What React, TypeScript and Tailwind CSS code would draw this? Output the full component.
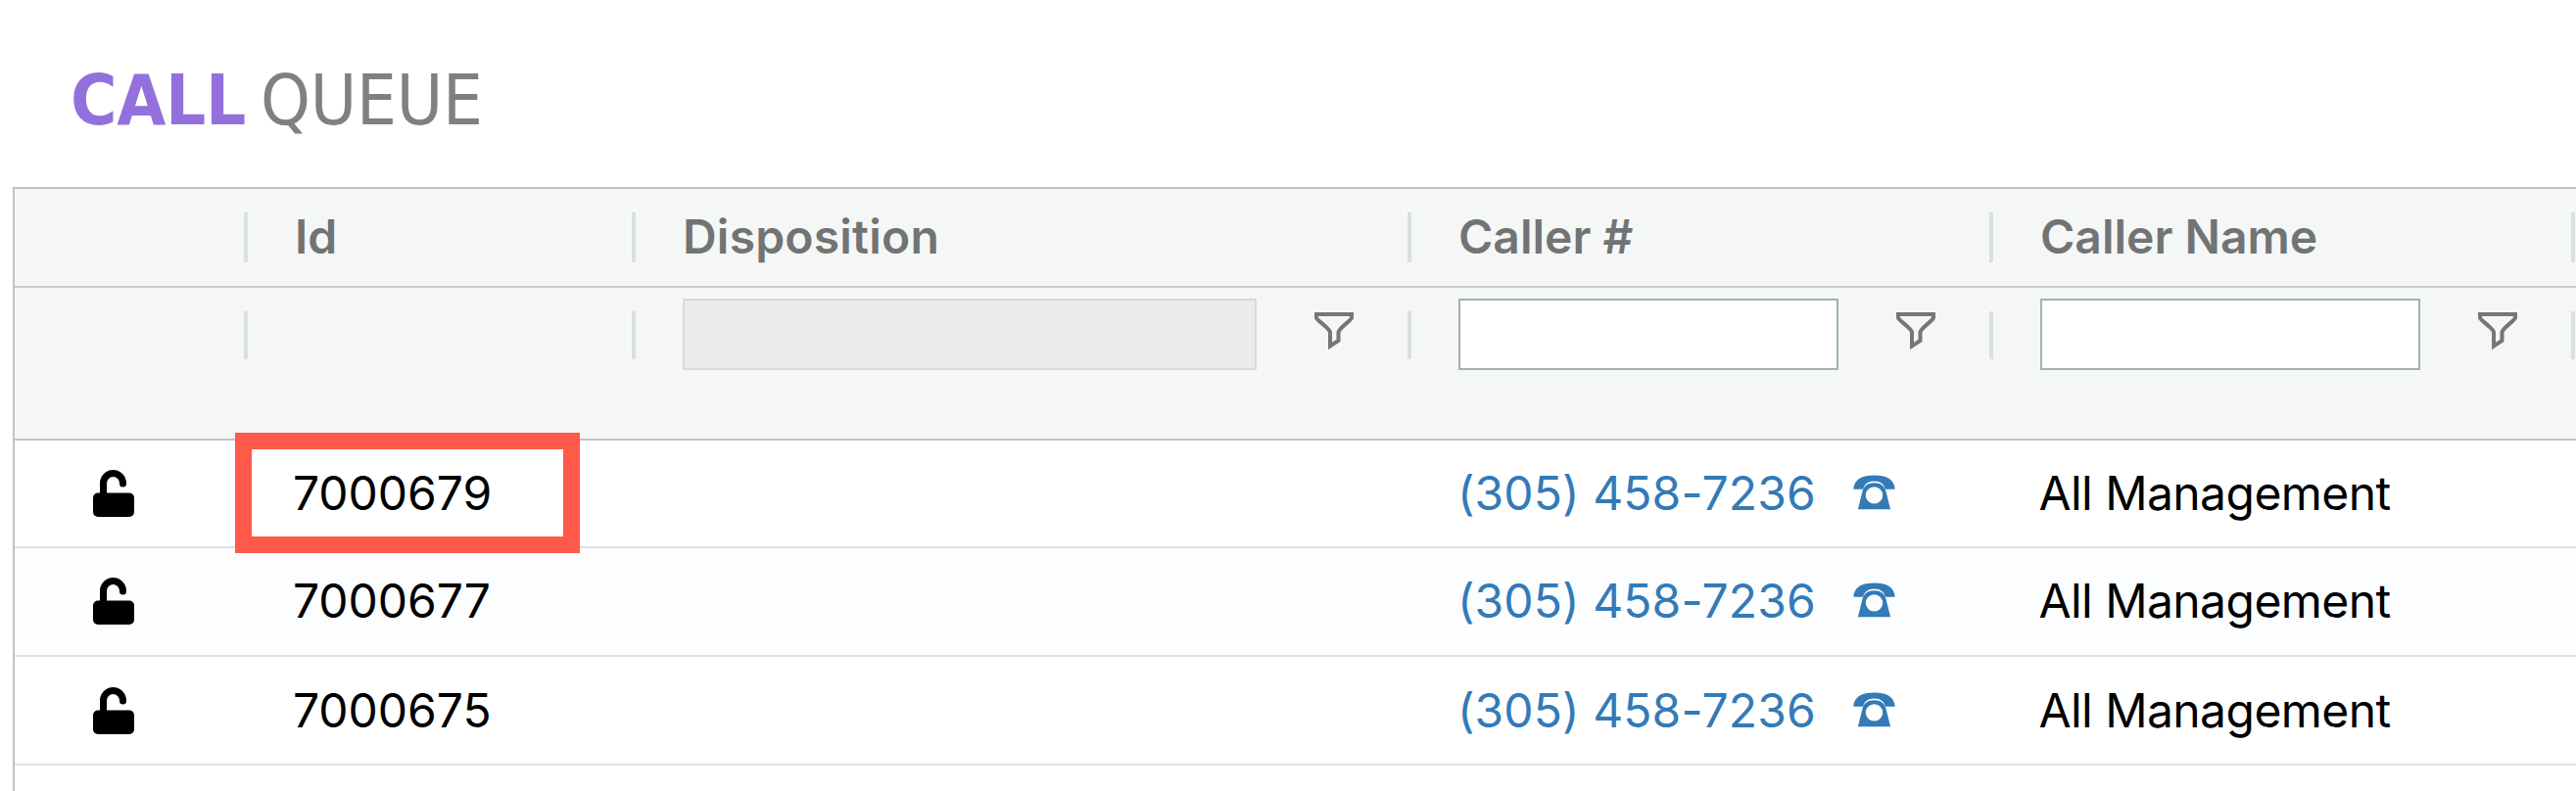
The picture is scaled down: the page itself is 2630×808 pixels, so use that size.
const COLS = "grid grid-cols-[236px_396px_792px_594px_594px_1fr]";

function Separator({ tall }: { tall?: boolean }) {
  return (
    <span
      className={
        tall
          ? "absolute top-[24px] -right-[2px] h-[51px] w-[4px] bg-[#d9dfe2]"
          : "absolute top-[24px] -right-[2px] h-[49px] w-[4px] bg-[#d9dfe2]"
      }
    />
  );
}

function UnlockIcon() {
  return (
    <svg viewBox="0 0 44 50" className="h-[50px] w-[44px]" fill="none">
      <path d="M11.500 27V14.500a10 10 0 0 1 20 0V15" stroke="#000" strokeWidth="7" strokeLinecap="round" />
      <rect x="1" y="24.500" width="42" height="24.500" rx="5" fill="#000" />
    </svg>
  );
}

function FunnelIcon() {
  return (
    <svg viewBox="0 0 42 42" className="h-[42px] w-[42px]" fill="none" stroke="#757777" strokeWidth="4">
      <path d="M3 4h36v3.600C38 11 25.500 18.500 25.500 22.500v8.500L17 36.500v-14C17 18.500 4 11 3 7.600z" />
    </svg>
  );
}

function PhoneIcon() {
  return (
    <svg viewBox="0 0 43 36" className="h-[36px] w-[43px]" fill="#337ab7">
      <path d="M.3 14.800C1 4.800 9 .6 21.500.6s20.500 4.200 21.200 14.200H32.900C31.500 9.500 28 6.500 21.500 6.500S11.500 9.500 10.100 14.800z" />
      <path
        fillRule="evenodd"
        d="M4.900 35.200 9.600 16.500C11 11.500 15 8.300 21.500 8.300s10.500 3.200 11.900 8.200l4.700 18.700zM21.500 12.200a8.700 8.700 0 1 0 0 17.400 8.700 8.700 0 1 0 0-17.400z"
      />
    </svg>
  );
}

function HeaderCell({ label, spacing = "" }: { label?: string; spacing?: string }) {
  return (
    <div className={`relative pl-[50px] text-[48px] leading-[97px] font-semibold whitespace-nowrap ${spacing}`}>
      {label}
      <Separator tall />
    </div>
  );
}

function FilterCell({ disabled }: { disabled?: boolean }) {
  return (
    <div className="relative flex items-start pt-[11px] pl-[50px]">
      <input
        aria-label="Filter"
        disabled={disabled}
        className={
          disabled
            ? "h-[73px] w-[586px] border-2 border-[#d5dbdb] bg-[#ebebeb]"
            : "h-[73px] w-[388px] border-2 border-[#a1b2b2] bg-white"
        }
      />
      <span className="mt-[12px] ml-[58px]">
        <FunnelIcon />
      </span>
      <Separator />
    </div>
  );
}

const rows = [
  { id: "7000679", look: "h-[110px] bg-white pt-[3px]", mark: true },
  { id: "7000677", look: "h-[111px] bg-[#fcfdfe] pt-[3px]" },
  { id: "7000675", look: "h-[111px] bg-white pt-[4px]" },
];

export default function App() {
  return (
    <div className="flex h-[808px] w-[2630px] flex-col overflow-hidden bg-white font-['Inter','Liberation_Sans',sans-serif]">
      <h1 className="flex h-[191px] shrink-0 pt-[60px] pl-[72px] font-['DejaVu_Sans_Condensed','DejaVu_Sans',sans-serif] text-[72px] leading-[84px] font-stretch-condensed">
        <span className="w-[194px] font-bold tracking-[-0.300px] text-[#9370db]">CALL</span>
        <span className="tracking-[-0.200px] text-[#808080]">QUEUE</span>
      </h1>
      <div className="ml-[13px] flex grow flex-col border-t-2 border-l-2 border-[#bdc3c7]">
        <div className={`${COLS} h-[101px] shrink-0 border-b-2 border-[#c5cbce] bg-[#f5f7f7] text-[#727474]`}>
          <HeaderCell />
          <HeaderCell label="Id" />
          <HeaderCell label="Disposition" spacing="tracking-[0.200px]" />
          <HeaderCell label="Caller #" />
          <HeaderCell label="Caller Name" />
        </div>
        <div className={`${COLS} h-[156px] shrink-0 border-b-2 border-[#bdc3c7] bg-[#f5f7f7]`}>
          <div className="relative">
            <Separator />
          </div>
          <div className="relative">
            <Separator />
          </div>
          <FilterCell disabled />
          <FilterCell />
          <FilterCell />
        </div>
        {rows.map((r) => (
          <div
            key={r.id}
            className={`${COLS} shrink-0 border-b-2 border-[#dde1e3] text-[48px] leading-[102px] whitespace-nowrap text-black ${r.look}`}
          >
            <div className="pt-[26px] pl-[79px]">
              <UnlockIcon />
            </div>
            <div className="relative pl-[48px] tracking-[-0.050px]">
              {r.id}
              {r.mark && (
                <span className="absolute -top-[11px] -left-[11px] h-[123px] w-[352px] border-[17.500px] border-[#ff594a]" />
              )}
            </div>
            <div />
            <div className="flex pl-[49px] text-[#337ab7]">
              <span className="w-[404px] tracking-[0.100px]">(305) 458-7236</span>
              <span className="pt-[32px]">
                <PhoneIcon />
              </span>
            </div>
            <div className="pl-[48.500px] tracking-[-0.560px]">All Management</div>
          </div>
        ))}
      </div>
    </div>
  );
}
